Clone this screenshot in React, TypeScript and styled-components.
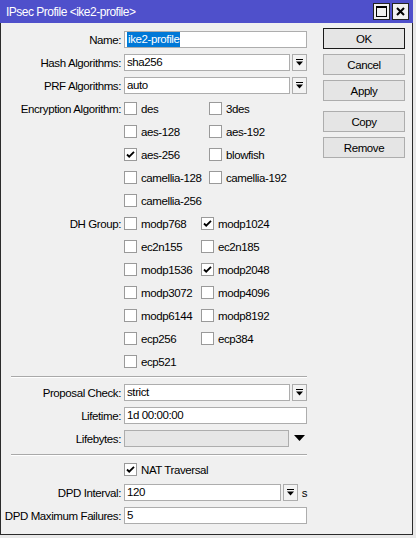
import { FC } from 'react'
import styled, { createGlobalStyle } from 'styled-components'

const GlobalStyle = createGlobalStyle`
  html, body {
    margin: 0;
    padding: 0;
    background: #e9e9e9;
  }
  body {
    font-family: 'Liberation Sans', Arial, sans-serif;
    font-size: 11.5px;
    letter-spacing: -0.4px;
    color: #000;
  }
`

const Window = styled.div`
  width: 411px;
  height: 534px;
  background: #f0f0f0;
  border-left: 1px solid #2b2b2b;
  border-right: 1px solid #2b2b2b;
  border-bottom: 1px solid #2b2b2b;
  display: flex;
  flex-direction: column;
`

const TitleBar = styled.div`
  height: 23px;
  margin: 0 -1px;
  background: #4f50cb;
  color: #fff;
  display: flex;
  align-items: center;
  padding: 0 4px 0 6px;
  font-size: 12px;
  letter-spacing: -0.5px;
`

const Title = styled.div`
  flex: 1;
`

const TitleButton = styled.div`
  width: 15px;
  height: 15px;
  margin-left: 2px;
  background: #f0f0f0;
  border: 1px solid #222;
  display: flex;
  align-items: center;
  justify-content: center;
`

const Body = styled.div`
  display: flex;
  padding-top: 5px;
`

const Form = styled.div`
  width: 306px;
  display: flex;
  flex-direction: column;
`

const Row = styled.div`
  display: grid;
  grid-template-columns: 120px 1fr;
  column-gap: 3px;
  align-items: center;
  height: 23px;
`

const Label = styled.div`
  text-align: right;
  white-space: nowrap;
`

const Field = styled.div`
  display: flex;
  align-items: center;
  height: 17px;
`

const Input = styled.div<{ $disabled?: boolean }>`
  flex: 1;
  height: 15px;
  border: 1px solid #adadad;
  background: ${p => (p.$disabled ? '#e6e6e6' : '#fff')};
  padding-left: 2px;
  line-height: 15px;
  white-space: nowrap;
  overflow: hidden;
`

const Selected = styled.span`
  display: inline-block;
  height: 15px;
  line-height: 15px;
  background: #0078d7;
  color: #fff;
  padding: 0 1px;
`

const DropButton = styled.div`
  width: 13px;
  height: 15px;
  margin-left: 2px;
  border: 1px solid #adadad;
  background: #f3f3f3;
  display: flex;
  align-items: center;
  justify-content: center;
`

const Plain = styled.div`
  width: 15px;
  margin-left: 3px;
  display: flex;
  justify-content: center;
`

const Suffix = styled.span`
  margin-left: 4px;
`

const Checks = styled.div<{ $col: number }>`
  display: grid;
  grid-template-columns: ${p => p.$col}px auto;
  align-items: center;
  height: 17px;
`

const CheckItem = styled.div`
  display: flex;
  align-items: center;
  white-space: nowrap;
`

const Box = styled.div`
  width: 11px;
  height: 11px;
  border: 1px solid #9a9a9a;
  background: #fff;
  margin-right: 4px;
  display: flex;
  align-items: center;
  justify-content: center;
`

const Separator = styled.div<{ $top: number; $bottom: number }>`
  margin: ${p => p.$top}px 0 ${p => p.$bottom}px 10px;
  height: 0;
  border-top: 1px solid #a9a9a9;
  border-bottom: 1px solid #fff;
`

const Buttons = styled.div`
  margin-left: 16px;
  width: 82px;
  display: flex;
  flex-direction: column;
  gap: 5px;
`

const Button = styled.div<{ $default?: boolean; $gap?: boolean }>`
  height: 19px;
  border: 1px solid ${p => (p.$default ? '#1a1a1a' : '#adadad')};
  background: #e5e5e5;
  display: flex;
  align-items: center;
  justify-content: center;
  margin-top: ${p => (p.$gap ? 5 : 0)}px;
`

const DropIcon: FC = () => (
  <svg width="9" height="9" viewBox="0 0 9 9">
    <rect x="1" y="1" width="7" height="1" fill="#000" />
    <path d="M1 3.5h7L4.5 7.5z" fill="#000" />
  </svg>
)

const Tri: FC = () => (
  <svg width="11" height="7" viewBox="0 0 11 7">
    <path d="M0 0h11L5.5 6z" fill="#000" />
  </svg>
)

const Tick: FC = () => (
  <svg width="9" height="9" viewBox="0 0 9 9">
    <path d="M1 4.5l2.2 2.2L8 1.8" stroke="#000" strokeWidth="1.8" fill="none" />
  </svg>
)

const Check: FC<{ label: string; on?: boolean }> = ({ label, on }) => (
  <CheckItem>
    <Box>{on && <Tick />}</Box>
    {label}
  </CheckItem>
)

type Opt = [string, boolean?]

const CheckGroup: FC<{ label: string; col: number; rows: Opt[][] }> = ({ label, col, rows }) => (
  <>
    {rows.map((r, i) => (
      <Row key={i}>
        <Label>{i === 0 ? label : ''}</Label>
        <Checks $col={col}>
          {r.map(([l, on]) => (
            <Check key={l} label={l} on={on} />
          ))}
        </Checks>
      </Row>
    ))}
  </>
)

const encryption: Opt[][] = [
  [['des'], ['3des']],
  [['aes-128'], ['aes-192']],
  [['aes-256', true], ['blowfish']],
  [['camellia-128'], ['camellia-192']],
  [['camellia-256']],
]

const dhGroups: Opt[][] = [
  [['modp768'], ['modp1024', true]],
  [['ec2n155'], ['ec2n185']],
  [['modp1536'], ['modp2048', true]],
  [['modp3072'], ['modp4096']],
  [['modp6144'], ['modp8192']],
  [['ecp256'], ['ecp384']],
  [['ecp521']],
]

const App: FC = () => (
  <>
    <GlobalStyle />
    <Window>
      <TitleBar>
        <Title>IPsec Profile &lt;ike2-profile&gt;</Title>
        <TitleButton>
          <svg width="11" height="11" viewBox="0 0 11 11">
            <rect x="0.5" y="0.5" width="10" height="10" fill="none" stroke="#000" />
            <rect x="0" y="0" width="11" height="2" fill="#000" />
          </svg>
        </TitleButton>
        <TitleButton>
          <svg width="9" height="9" viewBox="0 0 9 9">
            <path d="M1 1l7 7M8 1L1 8" stroke="#000" strokeWidth="2" />
          </svg>
        </TitleButton>
      </TitleBar>
      <Body>
        <Form>
          <Row>
            <Label>Name:</Label>
            <Field>
              <Input>
                <Selected>ike2-profile</Selected>
              </Input>
            </Field>
          </Row>
          <Row>
            <Label>Hash Algorithms:</Label>
            <Field>
              <Input>sha256</Input>
              <DropButton>
                <DropIcon />
              </DropButton>
            </Field>
          </Row>
          <Row>
            <Label>PRF Algorithms:</Label>
            <Field>
              <Input>auto</Input>
              <DropButton>
                <DropIcon />
              </DropButton>
            </Field>
          </Row>
          <CheckGroup label="Encryption Algorithm:" col={85} rows={encryption} />
          <CheckGroup label="DH Group:" col={77} rows={dhGroups} />
          <Separator $top={3} $bottom={3} />
          <Row>
            <Label>Proposal Check:</Label>
            <Field>
              <Input>strict</Input>
              <DropButton>
                <DropIcon />
              </DropButton>
            </Field>
          </Row>
          <Row>
            <Label>Lifetime:</Label>
            <Field>
              <Input>1d 00:00:00</Input>
            </Field>
          </Row>
          <Row>
            <Label>Lifebytes:</Label>
            <Field>
              <Input $disabled />
              <Plain>
                <Tri />
              </Plain>
            </Field>
          </Row>
          <Separator $top={4} $bottom={2} />
          <Row>
            <Label />
            <Checks $col={200}>
              <Check label="NAT Traversal" on />
            </Checks>
          </Row>
          <Row>
            <Label>DPD Interval:</Label>
            <Field>
              <Input>120</Input>
              <DropButton>
                <DropIcon />
              </DropButton>
              <Suffix>s</Suffix>
            </Field>
          </Row>
          <Row>
            <Label>DPD Maximum Failures:</Label>
            <Field>
              <Input>5</Input>
            </Field>
          </Row>
        </Form>
        <Buttons>
          <Button $default>OK</Button>
          <Button>Cancel</Button>
          <Button>Apply</Button>
          <Button $gap>Copy</Button>
          <Button>Remove</Button>
        </Buttons>
      </Body>
    </Window>
  </>
)

export default App
